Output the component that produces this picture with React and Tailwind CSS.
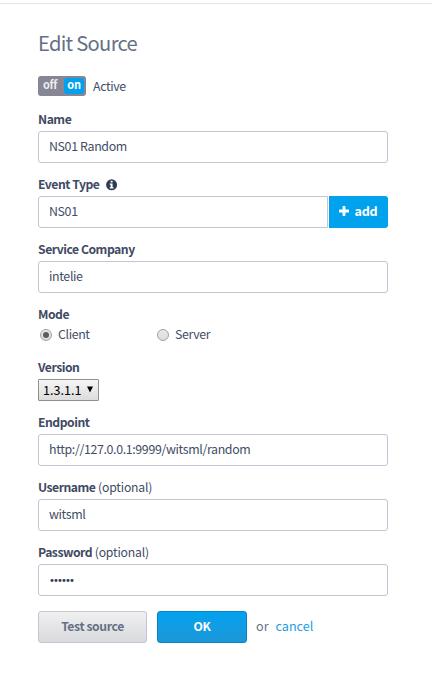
import { clsx } from "clsx";

function InfoIcon() {
  return (
    <svg className="ml-[7px]" width="12" height="12" viewBox="0 0 12 12">
      <circle cx="5.6" cy="5.8" r="5.5" fill="#2f3a55" />
      <path d="M4.6 1.8H6.6V3.5H4.6ZM3.7 4.6H6.6V8.2H7.5V9.5H3.7V8.2H4.6V5.8H3.7Z" fill="#fff" />
    </svg>
  );
}

function Label({ children, note, info }) {
  return (
    <div className="flex h-[23px] items-center text-[12.2px] font-bold tracking-[-0.48px] whitespace-pre text-[#3f4a63]">
      <span>{children}</span>
      {note && <span className="font-normal tracking-[-0.18px]"> {note}</span>}
      {info && <InfoIcon />}
    </div>
  );
}

function TextField({ value, attached, masked }) {
  return (
    <div
      className={clsx(
        "flex h-8 items-center border border-[#c4c4d2] bg-white px-2.5 pb-0.5 text-[12.4px] tracking-[-0.36px] text-[#434e66]",
        attached ? "w-[290px] rounded-l-[3px]" : "w-full rounded-[3px]",
      )}
    >
      {masked ? (
        <span className="pt-[3px] font-['DejaVu_Sans',sans-serif] text-[10px] tracking-[-1.9px] text-[#2f3a55]">{value}</span>
      ) : (
        value
      )}
    </div>
  );
}

function Field({ label, note, value, masked }) {
  return (
    <div className="mb-2.5">
      <Label note={note}>{label}</Label>
      <TextField value={value} masked={masked} />
    </div>
  );
}

function Radio({ checked, children }) {
  return (
    <div className="flex w-[117px] items-center pl-[2px] text-[12.4px] tracking-[-0.38px] text-[#434e66]">
      <span className="mr-[6px] flex size-3 items-center justify-center rounded-full border border-[#a2a2a2] bg-linear-to-b from-[#e9e9e9] to-[#dcdcdc]">
        {checked && <span className="size-1.5 rounded-full bg-[#5c5c5c]" />}
      </span>
      <span className="pb-0.5">{children}</span>
    </div>
  );
}

export default function App() {
  return (
    <div className="h-[674px] w-[432px] overflow-hidden bg-white pt-[3px] font-['Noto_Sans_CJK_SC',sans-serif] leading-none">
      <div className="border-t border-[#e6e6e6] pt-[27px] pl-[38px]">
        <div className="w-[350px]">
          <h1 className="flex h-[27px] items-center pb-[3px] text-[20.2px] tracking-[-0.72px] text-[#667085]">Edit Source</h1>
          <div className="mt-[18px] flex h-5 items-center">
            <div className="flex h-5 w-12 items-center rounded-[3px] bg-[#878695] p-[2px] text-[11px] font-bold text-white">
              <span className="flex h-4 flex-1 items-center justify-center pr-1 pb-[3px] tracking-[-0.3px] text-[#ececf0]">off</span>
              <span className="flex h-4 w-5 items-center justify-center rounded-[3px] bg-[#00a2ee] pb-[3px] tracking-[-0.2px]">on</span>
            </div>
            <span className="ml-[7px] text-[12.4px] tracking-[-0.4px] text-[#434e66]">Active</span>
          </div>
          <div className="mt-3">
            <Field label="Name" value="NS01 Random" />
            <div className="mb-2.5">
              <Label info>Event Type</Label>
              <div className="flex gap-px">
                <TextField value="NS01" attached />
                <button className="flex h-8 w-[59px] items-center justify-center gap-[5px] rounded-r-[3px] bg-[#00a2ee] pb-0.5 text-[12.6px] font-bold tracking-[-0.2px] text-white">
                  <svg width="10" height="10" viewBox="0 0 10 10">
                    <path d="M3.6 0.4Q3.6 0 4 0H6Q6.4 0 6.4 0.4V3.6H9.6Q10 3.6 10 4V6Q10 6.4 9.6 6.4H6.4V9.6Q6.4 10 6 10H4Q3.6 10 3.6 9.6V6.4H0.4Q0 6.4 0 6V4Q0 3.6 0.4 3.6H3.6Z" fill="#fff" />
                  </svg>
                  add
                </button>
              </div>
            </div>
            <Field label="Service Company" value="intelie" />
            <div>
              <Label>Mode</Label>
              <div className="flex h-[18px] items-center">
                <Radio checked>Client</Radio>
                <Radio>Server</Radio>
              </div>
            </div>
            <div className="mt-3 mb-2.5">
              <Label>Version</Label>
              <div className="flex h-[22px] w-[61px] items-center rounded-[1px] border border-[#8f8f8f] bg-linear-to-b from-[#f6f6f6] to-[#dcdcdc] pl-1 text-[12.6px] text-black">
                <span className="w-[38px]">1.3.1.1</span>
                <svg className="mb-px ml-[6px]" width="6" height="7" viewBox="0 0 6 7">
                  <path d="M0 0.5H6L3 6.5Z" fill="#000" />
                </svg>
              </div>
            </div>
            <Field label="Endpoint" value="http://127.0.0.1:9999/witsml/random" />
            <Field label="Username" note="(optional)" value="witsml" />
            <Field label="Password" note="(optional)" value="••••••" masked />
          </div>
          <div className="mt-[15px] flex h-8 items-center">
            <button className="h-8 w-[109px] rounded-[3px] border border-[#c4c4d2] bg-linear-to-b from-[#f0f0f1] to-[#d9dadd] pb-0.5 text-[12.2px] font-bold tracking-[-0.4px] text-[#667085]">
              Test source
            </button>
            <button className="ml-2.5 h-8 w-[90px] rounded-[3px] border border-[#0a85c2] bg-linear-to-b from-[#00a2ee] to-[#1b97d8] pb-0.5 text-[12.2px] font-bold tracking-[-0.3px] text-white">
              OK
            </button>
            <span className="ml-[9px] pb-px text-[12.6px] text-[#667085]">or</span>
            <a className="ml-[7px] pb-px text-[12.6px] text-[#1b9de2]">cancel</a>
          </div>
        </div>
      </div>
    </div>
  );
}
